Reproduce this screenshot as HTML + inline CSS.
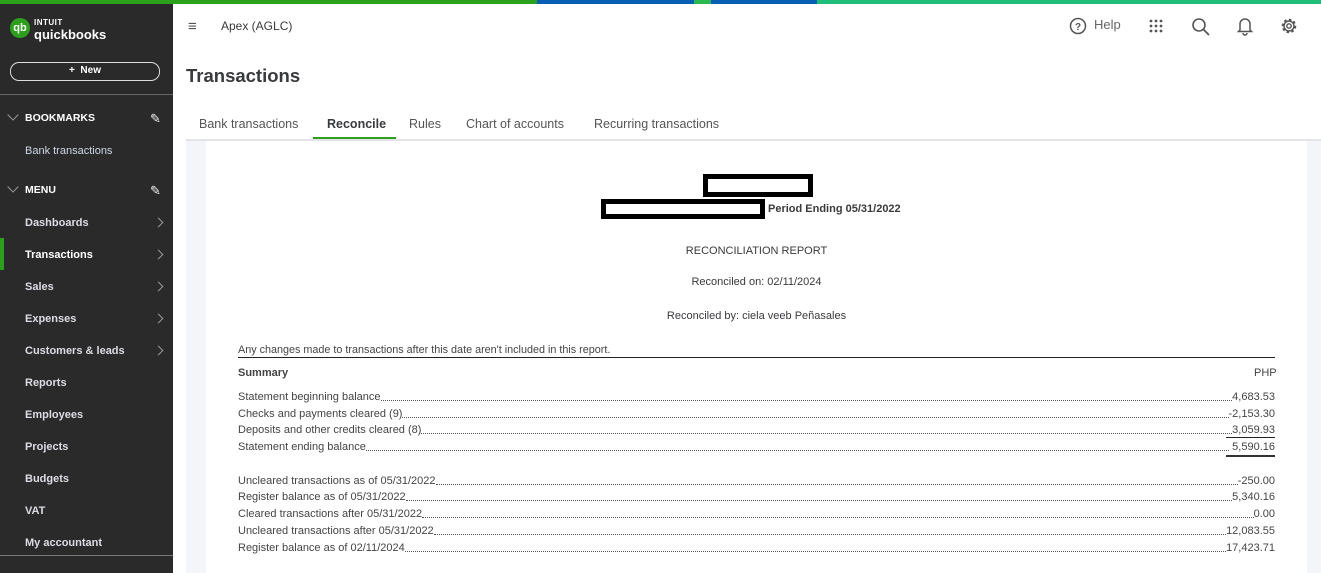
<!DOCTYPE html>
<html><head><meta charset="utf-8"><style>
*{margin:0;padding:0;box-sizing:border-box}
body{width:1321px;height:573px;overflow:hidden;font-family:"Liberation Sans",sans-serif;background:#fff;position:relative;color:#393a3d}
.abs{position:absolute}
#side{left:0;top:4px;width:173px;height:569px;background:#2a2a2a;color:#e8e8ee}
.si{position:absolute;left:25px;font-size:11px;font-weight:bold;color:#dcdde4}
.chev{position:absolute;left:155px;width:7px;height:7px;border-right:1.3px solid #999;border-top:1.3px solid #999;transform:rotate(45deg)}
.hd{position:absolute;left:25px;font-size:10.5px;font-weight:bold;color:#fff}
.dn{position:absolute;left:9px;width:8px;height:8px;border-right:1.3px solid #999;border-bottom:1.3px solid #999;transform:rotate(45deg)}
.r{position:absolute;left:238px;width:1037px;font-size:11px;color:#444;display:flex;height:14px;line-height:14px}
.r .d{flex:1;border-bottom:1px dotted #555;margin-bottom:3px}
.c{position:absolute;left:206px;width:1101px;text-align:center;font-size:11px;color:#393a3d}
.tab{position:absolute;top:117px;font-size:12.5px;color:#555}
</style></head><body>
<div class="abs" style="left:0;top:0;width:537px;height:4px;background:#2ca01c"></div>
<div class="abs" style="left:537px;top:0;width:157px;height:4px;background:#0a5db4"></div>
<div class="abs" style="left:694px;top:0;width:17px;height:4px;background:#2cb84f"></div>
<div class="abs" style="left:711px;top:0;width:106px;height:4px;background:#0a5db4"></div>
<div class="abs" style="left:817px;top:0;width:504px;height:4px;background:#1fbe7a"></div>

<div id="side" class="abs">
 <div class="abs" style="left:10px;top:14px;width:20px;height:20px;border-radius:50%;background:#2ca01c;color:#fff;font-size:11px;font-weight:bold;text-align:center;line-height:20px">qb</div>
 <div class="abs" style="left:34px;top:14px;font-size:8px;font-weight:bold;color:#fff;letter-spacing:.5px">INTUIT</div>
 <div class="abs" style="left:34px;top:23px;font-size:13px;font-weight:bold;color:#fff">quickbooks</div>
 <div class="abs" style="left:10px;top:58px;width:150px;height:19px;border:1.3px solid #ddd;border-radius:9px;text-align:center;font-size:10px;font-weight:bold;line-height:16px;color:#fff">+&nbsp;&nbsp;New</div>
 <div class="abs" style="left:0;top:90px;width:173px;height:1px;background:#666"></div>
 <div class="dn" style="top:107px"></div><div class="hd" style="top:108px">BOOKMARKS</div>
 <div class="abs" style="left:150px;top:107px;font-size:13px;color:#eee">✎</div>
 <div class="si" style="top:141px;font-weight:normal;color:#cfd6e6">Bank transactions</div>
 <div class="dn" style="top:179px"></div><div class="hd" style="top:180px">MENU</div>
 <div class="abs" style="left:150px;top:179px;font-size:13px;color:#eee">✎</div>
 <div class="si" style="top:213px">Dashboards</div><div class="chev" style="top:215px"></div>
 <div class="abs" style="left:0;top:234px;width:4px;height:32px;background:#2ca01c"></div>
 <div class="si" style="top:245px;color:#fff">Transactions</div><div class="chev" style="top:247px"></div>
 <div class="si" style="top:277px">Sales</div><div class="chev" style="top:279px"></div>
 <div class="si" style="top:309px">Expenses</div><div class="chev" style="top:311px"></div>
 <div class="si" style="top:341px">Customers &amp; leads</div><div class="chev" style="top:343px"></div>
 <div class="si" style="top:373px">Reports</div>
 <div class="si" style="top:405px">Employees</div>
 <div class="si" style="top:437px">Projects</div>
 <div class="si" style="top:469px">Budgets</div>
 <div class="si" style="top:501px">VAT</div>
 <div class="si" style="top:533px">My accountant</div>
 <div class="abs" style="left:0;top:551px;width:173px;height:1px;background:#777"></div>
</div>

<div class="abs" style="left:188px;top:18px;font-size:15px;color:#555">≡</div>
<div class="abs" style="left:221px;top:19px;font-size:12px;color:#393a3d">Apex (AGLC)</div>
<svg class="abs" style="left:1069px;top:17px" width="18" height="18" viewBox="0 0 18 18"><circle cx="9" cy="9" r="7.5" fill="none" stroke="#555" stroke-width="1.5"/><text x="9" y="13" font-size="10" text-anchor="middle" fill="#555" font-family="Liberation Sans" font-weight="bold">?</text></svg>
<div class="abs" style="left:1094px;top:17px;font-size:13px;color:#666">Help</div>
<svg class="abs" style="left:1149px;top:19px" width="14" height="14"><g fill="#555"><circle cx="2" cy="2" r="1.4"/><circle cx="7" cy="2" r="1.4"/><circle cx="12" cy="2" r="1.4"/><circle cx="2" cy="7" r="1.4"/><circle cx="7" cy="7" r="1.4"/><circle cx="12" cy="7" r="1.4"/><circle cx="2" cy="12" r="1.4"/><circle cx="7" cy="12" r="1.4"/><circle cx="12" cy="12" r="1.4"/></g></svg>
<svg class="abs" style="left:1191px;top:17px" width="20" height="20"><circle cx="8" cy="8" r="6" fill="none" stroke="#555" stroke-width="1.6"/><line x1="12.5" y1="12.5" x2="18" y2="18" stroke="#555" stroke-width="1.8"/></svg>
<svg class="abs" style="left:1236px;top:16px" width="18" height="20"><path d="M4 14 V8 a5 5 0 0 1 10 0 V14 L15.5 15.5 H2.5 Z" fill="none" stroke="#555" stroke-width="1.5"/><path d="M7 17 a2 2 0 0 0 4 0" fill="none" stroke="#555" stroke-width="1.5"/></svg>
<svg class="abs" style="left:1280px;top:17px" width="18" height="18" viewBox="0 0 18 18"><circle cx="9" cy="9" r="5.8" fill="none" stroke="#555" stroke-width="3" stroke-dasharray="2.3 2.2"/><circle cx="9" cy="9" r="5" fill="none" stroke="#555" stroke-width="1.4"/><circle cx="9" cy="9" r="2.2" fill="none" stroke="#555" stroke-width="1.4"/></svg>

<div class="abs" style="left:186px;top:65px;font-size:18.5px;font-weight:bold;color:#393a3d">Transactions</div>
<div class="tab" style="left:199px">Bank transactions</div>
<div class="tab" style="left:327px;font-weight:bold;color:#393a3d">Reconcile</div>
<div class="abs" style="left:313px;top:137px;width:83px;height:3px;background:#2ca01c"></div>
<div class="tab" style="left:409px">Rules</div>
<div class="tab" style="left:466px">Chart of accounts</div>
<div class="tab" style="left:594px">Recurring transactions</div>
<div class="abs" style="left:186px;top:139px;width:1135px;height:2px;background:#e3e4e8"></div>
<div class="abs" style="left:186px;top:141px;width:1135px;height:432px;background:#f4f5f8"></div>
<div class="abs" style="left:206px;top:141px;width:1101px;height:432px;background:#fff"></div>

<div class="abs" style="left:703px;top:174px;width:110px;height:23px;border:5px solid #000"></div>
<div class="abs" style="left:601px;top:199px;width:164px;height:20px;border:5px solid #000"></div>
<div class="abs" style="left:768px;top:203px;font-size:11px;font-weight:bold;color:#393a3d">Period Ending 05/31/2022</div>
<div class="c" style="top:245px">RECONCILIATION REPORT</div>
<div class="c" style="top:276px">Reconciled on: 02/11/2024</div>
<div class="c" style="top:310px">Reconciled by: ciela veeb Peñasales</div>
<div class="abs" style="left:238px;top:344px;font-size:10.8px;color:#444">Any changes made to transactions after this date aren't included in this report.</div>
<div class="abs" style="left:238px;top:357px;width:1037px;height:1px;background:#222"></div>
<div class="abs" style="left:238px;top:367px;font-size:11px;font-weight:bold;color:#444">Summary</div>
<div class="abs" style="left:1254px;top:367px;font-size:11px;color:#444">PHP</div>
<div class="r" style="top:390px"><span>Statement beginning balance</span><span class="d"></span><span>4,683.53</span></div>
<div class="r" style="top:407px"><span>Checks and payments cleared (9)</span><span class="d"></span><span>-2,153.30</span></div>
<div class="r" style="top:423px"><span>Deposits and other credits cleared (8)</span><span class="d"></span><span>3,059.93</span></div>
<div class="abs" style="left:1226px;top:437px;width:49px;height:1px;background:#222"></div>
<div class="r" style="top:440px"><span>Statement ending balance</span><span class="d"></span><span>&nbsp;5,590.16</span></div>
<div class="abs" style="left:1226px;top:455px;width:49px;height:2px;background:#333"></div>
<div class="r" style="top:474px"><span>Uncleared transactions as of 05/31/2022</span><span class="d"></span><span>-250.00</span></div>
<div class="r" style="top:490px"><span>Register balance as of 05/31/2022</span><span class="d"></span><span>5,340.16</span></div>
<div class="r" style="top:507px"><span>Cleared transactions after 05/31/2022</span><span class="d"></span><span>0.00</span></div>
<div class="r" style="top:524px"><span>Uncleared transactions after 05/31/2022</span><span class="d"></span><span>12,083.55</span></div>
<div class="r" style="top:541px"><span>Register balance as of 02/11/2024</span><span class="d"></span><span>17,423.71</span></div>
</body></html>
